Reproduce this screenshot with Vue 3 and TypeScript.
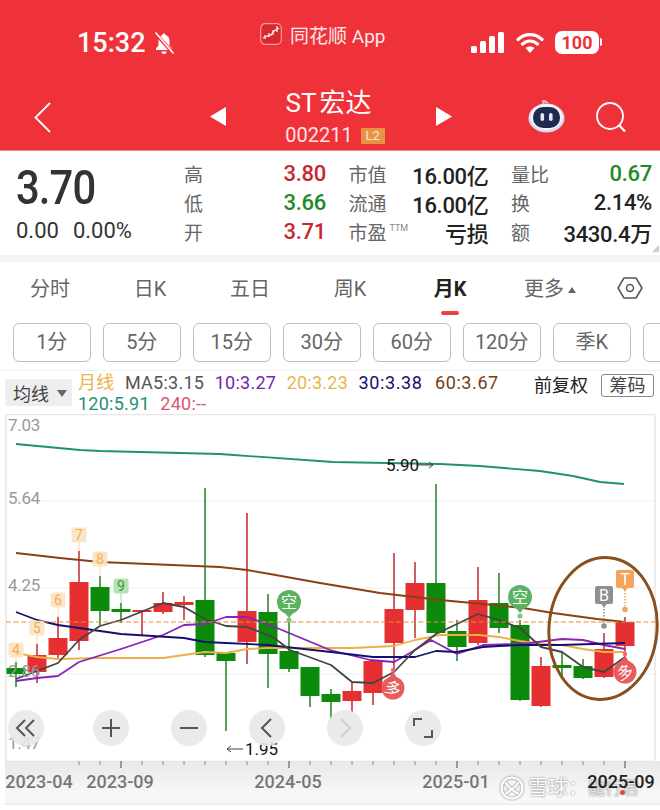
<script setup lang="ts">
interface Candle {
  x: number;
  up: boolean;
  top: number;
  bottom: number;
  high: number;
  low: number;
}

// [high, bodyTop, bodyBottom, low, red?] in chart pixels, one month every 21px from x=16
const rows: [number, number, number, number, boolean][] = [
  [662, 668, 674, 687, false],
  [644, 655, 672, 683, true],
  [617, 638, 655, 659, true],
  [551, 582, 641, 650, true],
  [576, 587, 611, 625, false],
  [603, 609, 612, 623, false],
  [610, 610, 612, 635, true],
  [592, 603, 612, 614, true],
  [596, 602, 605, 620, true],
  [488, 600, 655, 657, false],
  [652, 653, 661, 731, false],
  [513, 611, 642, 664, true],
  [594, 612, 654, 688, false],
  [620, 651, 669, 672, false],
  [667, 667, 696, 707, false],
  [689, 694, 702, 720, false],
  [682, 691, 701, 712, true],
  [661, 661, 693, 705, true],
  [553, 609, 643, 670, true],
  [562, 583, 610, 638, true],
  [484, 583, 633, 634, false],
  [620, 631, 647, 661, false],
  [567, 600, 643, 645, true],
  [573, 603, 628, 633, false],
  [620, 625, 700, 701, false],
  [657, 666, 706, 707, true],
  [653, 665, 668, 678, false],
  [659, 666, 678, 679, false],
  [633, 649, 677, 678, true],
  [617, 622, 646, 658, true],
];

const candles: Candle[] = rows.map((r, i) => ({
  x: 16 + i * 21,
  high: r[0],
  top: r[1],
  bottom: r[2],
  low: r[3],
  up: r[4],
}));

const lines = [
  { color: '#1f8f78', points: '16,444 80,450 100,451 220,454 333,462 440,464 480,466 540,471 573,476 600,482 624,484' },
  { color: '#8a3f14', points: '16,553 60,558 100,562 220,567 247,570 270,574 320,583 380,593 440,600 483,604 523,608 553,613 597,619 625,622' },
  { color: '#eeb046', points: '16,653 37,657 58,659 100,658 163,658 184,655 205,652 226,653 247,649 268,648 352,648 373,647 394,646 415,640 440,635 478,635 499,637 520,641 541,644 562,645 583,649 604,652 625,652' },
  { color: '#8a22b8', points: '16,681 37,678 58,676 79,662 121,649 163,635 184,625 205,624 226,617 247,617 277,628 330,650 370,660 394,662 410,653 431,640 457,654 483,645 520,644 530,643 562,639 583,640 604,645 625,649' },
  { color: '#141070', points: '16,612 37,620 58,625 79,628 121,634 184,638 205,642 226,643 268,645 331,652 373,657 415,657 436,651 457,652 483,647 499,646 520,645 560,645 625,643' },
  { color: '#444444', points: '16,679 58,663 79,640 100,626 121,620 163,603 184,607 205,619 226,626 247,627 273,637 290,650 331,665 352,682 373,683 394,672 415,650 436,634 457,624 478,614 499,620 520,628 541,647 562,652 583,667 604,672 625,657' },
];

const priceLabels = [
  { text: '7.03', y: 431 },
  { text: '5.64', y: 504 },
  { text: '4.25', y: 591 },
  { text: '2.86', y: 677 },
  { text: '1.47', y: 749 },
];

const counts = [
  { n: '4', x: 16, y: 650, late: false, stem: 12 },
  { n: '5', x: 37, y: 628, late: false, stem: 16 },
  { n: '6', x: 58, y: 600, late: false, stem: 17 },
  { n: '7', x: 79, y: 535, late: false, stem: 16 },
  { n: '8', x: 100, y: 559, late: false, stem: 17 },
  { n: '9', x: 121, y: 586, late: true, stem: 17 },
];

const ticks = candles.map((c) => c.x).filter((x) => x >= 79);

const dates = [
  { text: '2023-04', x: 39, dark: false },
  { text: '2023-09', x: 120, dark: false },
  { text: '2024-05', x: 288, dark: false },
  { text: '2025-01', x: 456, dark: false },
  { text: '2025-09', x: 621, dark: true },
];

const tabs = ['分时', '日K', '五日', '周K', '月K'];
const chips = ['1分', '5分', '15分', '30分', '60分', '120分', '季K', ''];
</script>

<template>
  <div class="page">
    <header class="head">
      <div class="status">
        <div class="clock">
          <span>15:32</span>
          <svg class="bell" viewBox="0 0 24 24" aria-hidden="true">
            <path d="M12 2.5c-1 0-1.6.7-1.7 1.6C7.700 5 6.500 7.300 6.500 10v4.500L4 17.500V19h16v-1.500l-2.500-3V10c0-2.700-1.200-5-3.800-5.900-.1-.9-.7-1.600-1.700-1.600zM9.500 20.500a2.500 2.500 0 0 0 5 0z" fill="#fff" />
            <path d="M3.500 2.500l18 20" stroke="#ef3239" stroke-width="3.500" />
            <path d="M3.500 1.500l18 21" stroke="#fff" stroke-width="1.600" />
          </svg>
        </div>
        <div class="notch">
          <svg class="logo" viewBox="0 0 22 22" aria-hidden="true">
            <rect x=".7" y=".7" width="20.600" height="20.600" rx="4.500" fill="#d9282e" stroke="#f79a9a" stroke-width="1.200" />
            <path d="M3 15l4-2 4-1 3-4 5-3" fill="none" stroke="#fff" stroke-width="1.300" />
            <path d="M5 12v4M9 10v4M13 7v5M17 3v6" stroke="#ffe1e1" stroke-width="1.400" />
          </svg>
          <span>同花顺 App</span>
        </div>
        <div class="sys">
          <svg class="signal" viewBox="0 0 33 21" aria-hidden="true">
            <rect x="0" y="14" width="6" height="7" rx="1.500" fill="#fff" />
            <rect x="9" y="9" width="6" height="12" rx="1.500" fill="#fff" />
            <rect x="18" y="4" width="6" height="17" rx="1.500" fill="#fff" />
            <rect x="27" y="0" width="6" height="21" rx="1.500" fill="#fff" />
          </svg>
          <svg class="wifi" viewBox="0 0 28 21" aria-hidden="true">
            <path d="M2 7.500c7-6.500 17-6.500 24 0M6.500 12c4.500-4 10.500-4 15 0" fill="none" stroke="#fff" stroke-width="3.200" stroke-linecap="round" />
            <path d="M14 21l-4.500-5c2.500-2 6.500-2 9 0z" fill="#fff" />
          </svg>
          <div class="battery">100</div>
          <i class="nub"></i>
        </div>
      </div>

      <div class="nav">
        <svg class="back" viewBox="0 0 17 31" aria-hidden="true">
          <path d="M16 1L1.500 15.500 16 30" fill="none" stroke="#fff" stroke-width="1.800" />
        </svg>
        <svg class="tri tri-l" viewBox="0 0 16 19" aria-hidden="true"><path d="M16 0v19L0 9.500z" fill="#fff" /></svg>
        <div class="title">
          <div class="name">ST 宏达</div>
          <div class="code">002211<span class="badge">L2</span></div>
        </div>
        <svg class="tri tri-r" viewBox="0 0 16 19" aria-hidden="true"><path d="M0 0v19l16-9.500z" fill="#fff" /></svg>
        <svg class="robot" viewBox="0 0 37 34" aria-hidden="true">
          <path d="M15 5l2-3 3 2" fill="none" stroke="#e9dfee" stroke-width="1.400" />
          <circle cx="15.500" cy="2.500" r="1.800" fill="#f3a6a6" />
          <ellipse cx="18.500" cy="19" rx="18" ry="14.500" fill="#d9d9f3" />
          <ellipse cx="18.500" cy="18" rx="16" ry="13" fill="#f3f3fb" />
          <rect x="5" y="8" width="27" height="21" rx="10" fill="#1e2b4f" />
          <rect x="12.500" y="14" width="3.600" height="8" rx="1.800" fill="#dfe8ff" />
          <rect x="21" y="14" width="3.600" height="8" rx="1.800" fill="#dfe8ff" />
        </svg>
        <svg class="search" viewBox="0 0 30 30" aria-hidden="true">
          <circle cx="14" cy="14" r="13" fill="none" stroke="#fff" stroke-width="1.900" />
          <path d="M23 23l6 6.500" stroke="#fff" stroke-width="2.200" />
        </svg>
      </div>
    </header>

    <section class="quote">
      <div class="last">
        <div class="price">3.70</div>
        <div class="change"><span>0.00</span><span>0.00%</span></div>
      </div>
      <div class="stats">
        <div class="stat"><label>高</label><b class="red">3.80</b></div>
        <div class="stat"><label>市值</label><b>16.00亿</b></div>
        <div class="stat"><label>量比</label><b class="green">0.67</b></div>
        <div class="stat"><label>低</label><b class="green">3.66</b></div>
        <div class="stat"><label>流通</label><b>16.00亿</b></div>
        <div class="stat"><label>换</label><b>2.14%</b></div>
        <div class="stat"><label>开</label><b class="red">3.71</b></div>
        <div class="stat"><label>市盈<sup>TTM</sup></label><b>亏损</b></div>
        <div class="stat"><label>额</label><b>3430.4万</b></div>
      </div>
      <i class="grip"></i>
    </section>

    <nav class="tabs">
      <div v-for="t in tabs" :key="t" class="tab" :class="{ on: t === '月K' }">{{ t }}</div>
      <div class="tab">更多<i class="caret"></i></div>
      <svg class="hex" viewBox="0 0 26 22" aria-hidden="true">
        <path d="M7 1h12l6 10-6 10H7L1 11z" fill="none" stroke="#555" stroke-width="1.500" stroke-linejoin="round" />
        <circle cx="13" cy="11" r="3.500" fill="none" stroke="#555" stroke-width="1.500" />
      </svg>
    </nav>

    <div class="chips">
      <div v-for="(c, i) in chips" :key="i" class="chip">{{ c }}</div>
    </div>

    <div class="legend">
      <div class="ma-select">均线<i></i></div>
      <div class="ma-values">
        <span class="c-yellow">月线</span>
        <span class="c-grey">MA5:3.15</span>
        <span class="c-purple">10:3.27</span>
        <span class="c-yellow">20:3.23</span>
        <span class="c-navy">30:3.38</span>
        <span class="c-brown">60:3.67</span>
        <span class="c-teal">120:5.91</span>
        <span class="c-pink">240:--</span>
      </div>
      <div class="adjust">前复权</div>
      <div class="chouma">筹码</div>
    </div>

    <div class="chart">
      <svg class="plot" width="660" height="347" viewBox="0 414 660 347" aria-hidden="true">
        <rect x="6" y="414.500" width="649" height="347" fill="#fff" stroke="#e6e6e6" stroke-width="1.500" />
        <path d="M6 501h649M6 588h649M6 674h649" stroke="#efefef" stroke-width="1.200" />

        <g v-for="c in candles" :key="c.x">
          <line :x1="c.x" :x2="c.x" :y1="c.high" :y2="c.low" :stroke="c.up ? '#c2363c' : '#2c8a2c'" stroke-width="1.600" />
          <rect :x="c.x - 9.500" :y="c.top" width="19" :height="c.bottom - c.top" :fill="c.up ? '#e62f30' : '#0b8a0b'" />
        </g>

        <polyline v-for="l in lines" :key="l.color" :points="l.points" fill="none" :stroke="l.color" stroke-width="1.800" stroke-linejoin="round" />
        <line x1="6" x2="655" y1="622" y2="622" stroke="#e28f3c" stroke-width="1.200" stroke-dasharray="5 2.500" />

        <g v-for="m in counts" :key="m.n">
          <line :x1="m.x" :x2="m.x" :y1="m.y + 7" :y2="m.y + m.stem" :stroke="m.late ? '#bfe6bf' : '#fbe3c4'" stroke-width="1.500" />
          <rect :x="m.x - 7.500" :y="m.y - 7.500" width="15" height="15" rx="2" :fill="m.late ? '#aee0ae' : '#fbe3c4'" opacity=".92" />
          <text :x="m.x" :y="m.y + 5" text-anchor="middle" class="count" :fill="m.late ? '#2f9a3a' : '#f3b04e'">{{ m.n }}</text>
        </g>

        <text v-for="p in priceLabels" :key="p.text" x="8" :y="p.y" class="price-label">{{ p.text }}</text>

        <text x="386" y="471" class="peak">5.90</text>
        <path d="M418 465h15M429 462l4 3-4 3" fill="none" stroke="#444" stroke-width="1" />
        <path d="M243 749h-16M231 746l-4 3 4 3" fill="none" stroke="#444" stroke-width="1" />
        <text x="245" y="755" class="peak">1.95</text>

        <g v-for="k in [{ x: 289, y: 602, tail: 620 }, { x: 520, y: 597, tail: 616 }]" :key="k.x">
          <circle :cx="k.x" :cy="k.y" r="12" fill="#5cb35f" />
          <path :d="`M${k.x - 5} ${k.y + 10}L${k.x} ${k.y + 16}L${k.x + 5} ${k.y + 10}z`" fill="#5cb35f" />
          <circle :cx="k.x" :cy="k.tail" r="2.500" fill="#7cc47f" />
          <text :x="k.x" :y="k.y + 6" text-anchor="middle" class="tag">空</text>
        </g>

        <ellipse cx="603" cy="628.500" rx="54" ry="71" transform="rotate(5 603 628.500)" fill="none" stroke="#8a4f1f" stroke-width="3" />

        <line x1="604" x2="604" y1="606" y2="626" stroke="#8f8f8f" stroke-width="1.500" stroke-dasharray="1.500 1.500" />
        <circle cx="604" cy="626" r="2.800" fill="#8f8f8f" />
        <rect x="595" y="586" width="18" height="18" rx="2" fill="#8f8f8f" />
        <path d="M601 604l3 3 3-3z" fill="#8f8f8f" />
        <text x="604" y="601" text-anchor="middle" class="tag">B</text>

        <line x1="625" x2="625" y1="590" y2="609" stroke="#f4a25c" stroke-width="1.500" stroke-dasharray="1.500 1.500" />
        <circle cx="625" cy="609.500" r="2.800" fill="#f4a25c" />
        <rect x="616" y="570" width="18" height="18" rx="2" fill="#f4a25c" />
        <path d="M622 588l3 3 3-3z" fill="#f4a25c" />
        <text x="625" y="585" text-anchor="middle" class="tag">T</text>

        <g v-for="d in [{ x: 393, y: 688, tip: 670, r: 20 }, { x: 625, y: 672, tip: 654, r: -20 }]" :key="d.x">
          <circle :cx="d.x" :cy="d.tip" r="2.200" fill="#ec6a6a" />
          <path :d="`M${d.x - 4} ${d.y - 10}L${d.x} ${d.tip + 1}L${d.x + 4} ${d.y - 10}z`" fill="#e95c5c" />
          <circle :cx="d.x" :cy="d.y" r="11.500" fill="#e95c5c" />
          <text :x="d.x" :y="d.y + 6" text-anchor="middle" class="tag" :transform="`rotate(${d.r} ${d.x} ${d.y})`">多</text>
        </g>
      </svg>

      <div class="tools">
        <button type="button" class="tool">
          <svg viewBox="0 0 22 20"><path d="M10 2l-8 8 8 8M19 2l-8 8 8 8" fill="none" stroke="#555" stroke-width="2" /></svg>
        </button>
        <button type="button" class="tool">
          <svg viewBox="0 0 22 20"><path d="M11 1v18M2 10h18" fill="none" stroke="#555" stroke-width="2" /></svg>
        </button>
        <button type="button" class="tool">
          <svg viewBox="0 0 22 20"><path d="M2 10h18" fill="none" stroke="#555" stroke-width="2" /></svg>
        </button>
        <button type="button" class="tool">
          <svg viewBox="0 0 22 20"><path d="M15 1L6 10l9 9" fill="none" stroke="#555" stroke-width="2" /></svg>
        </button>
        <button type="button" class="tool">
          <svg viewBox="0 0 22 20"><path d="M7 1l9 9-9 9" fill="none" stroke="#cfcfcf" stroke-width="2" /></svg>
        </button>
        <button type="button" class="tool">
          <svg viewBox="0 0 22 20"><path d="M2 8V1h8M20 12v7h-8" fill="none" stroke="#555" stroke-width="2" /></svg>
        </button>
      </div>
    </div>

    <div class="axis">
      <svg class="ticks" width="660" height="8" aria-hidden="true">
        <line v-for="x in ticks" :key="x" :x1="x" :x2="x" y1="0" :y2="[121, 289, 457, 625].includes(x) ? 7 : 4" stroke="#777" :stroke-width="[121, 289, 457, 625].includes(x) ? 1.400 : .8" />
      </svg>
      <span v-for="d in dates" :key="d.text" class="date" :class="{ dark: d.dark }" :style="{ left: d.x + 'px' }">{{ d.text }}</span>
      <div class="mark">
        <svg viewBox="0 0 24 24" aria-hidden="true">
          <circle cx="12" cy="12" r="10.500" fill="none" stroke="#fff" stroke-width="2.200" />
          <path d="M5 6c3 5 6 8 14 12M19 6c-3 5-5 6-7 7-2 2-4 3-7 5" fill="none" stroke="#fff" stroke-width="2.200" />
        </svg>
        <span class="wm-a">雪球：</span><span class="wm-b">龍行君</span>
      </div>
      <i class="red-dot"></i>
    </div>
  </div>
</template>

<style>
html,
body {
  margin: 0;
  background: #fff;
}
</style>

<style scoped>
.page {
  position: relative;
  width: 660px;
  height: 810px;
  overflow: hidden;
  background: #fff;
  color: #222;
  font-family: Roboto, "Noto Sans CJK SC", sans-serif;
}

.head {
  height: 150px;
  background: #ef3239;
  border-bottom: 1px solid #ea8a8a;
  color: #fff;
}

.status {
  display: flex;
  justify-content: space-between;
  height: 90px;
  padding: 23px 61px 0 77px;
  box-sizing: border-box;
}

.clock {
  display: flex;
  align-items: center;
  gap: 6px;
  height: 39px;
  font-size: 27px;
  font-weight: 500;
}

.bell {
  width: 24px;
  height: 24px;
}

.notch {
  display: flex;
  align-items: center;
  gap: 8px;
  height: 22px;
  margin-left: -1px;
  font-size: 19px;
  color: #fbe9e9;
}

.logo {
  width: 22px;
  height: 22px;
}

.sys {
  position: relative;
  display: flex;
  align-items: center;
  height: 39px;
}

.signal {
  width: 33px;
  height: 21px;
}

.wifi {
  width: 28px;
  height: 21px;
  margin-left: 12px;
}

.battery {
  width: 44px;
  height: 23px;
  margin-left: 11px;
  border-radius: 7px;
  background: #fff;
  color: #ef3239;
  font-size: 18px;
  font-weight: 700;
  line-height: 23px;
  text-align: center;
}

.nub {
  position: absolute;
  right: -3px;
  top: 15px;
  width: 2px;
  height: 8px;
  border-radius: 0 2px 2px 0;
  background: #fff;
}

.nav {
  position: relative;
  display: flex;
  align-items: flex-start;
  height: 60px;
}

.back {
  width: 17px;
  height: 31px;
  margin: 12px 0 0 34px;
}

.tri {
  width: 16px;
  height: 19px;
  margin-top: 17px;
}

.tri-l {
  margin-left: 159px;
}

.title {
  width: 210px;
  text-align: center;
}

.name {
  font-size: 26px;
  line-height: 26px;
  margin-top: 0;
  word-spacing: -3px;
  padding-right: 5px;
}

.code {
  display: flex;
  justify-content: center;
  align-items: center;
  gap: 8px;
  margin-top: 11px;
  padding-left: 8px;
  font-size: 20px;
  line-height: 17px;
  color: #fde4e4;
}

.badge {
  width: 24px;
  height: 16px;
  background: #e8933f;
  font-size: 13px;
  line-height: 16px;
  text-align: center;
}

.robot {
  width: 37px;
  height: 34px;
  margin: 9px 0 0 76px;
}

.search {
  width: 30px;
  height: 30px;
  margin: 12px 0 0 31px;
}

.quote {
  position: relative;
  display: flex;
  height: 105px;
  box-sizing: border-box;
  border-bottom: 1px solid #f2f2f2;
}

.last {
  width: 184px;
  padding: 10px 0 0 16px;
  box-sizing: border-box;
}

.price {
  font-size: 48px;
  line-height: 54px;
  font-weight: 500;
  color: #333;
  letter-spacing: -1px;
  transform: scaleX(.87);
  transform-origin: left;
}

.change {
  display: flex;
  gap: 14px;
  margin: 2px 0 0;
  font-size: 22px;
  line-height: 28px;
  color: #333;
}

.stats {
  display: grid;
  grid-template-columns: 142px 140px 141px;
  grid-auto-rows: 29px;
  column-gap: 22.500px;
  padding-top: 8px;
}

.stat {
  display: flex;
  justify-content: space-between;
  align-items: center;
  white-space: nowrap;
}

.stat label {
  font-size: 19px;
  color: #666;
}

.stat sup {
  margin-left: 3px;
  font-size: 9px;
  line-height: 0;
  color: #888;
  vertical-align: 9px;
}

.stat b {
  font-size: 22px;
  font-weight: 500;
  color: #222;
  letter-spacing: -.3px;
}

.stat b.red {
  color: #c8282d;
}

.stat b.green {
  color: #1e8a26;
}

.grip {
  position: absolute;
  right: 1px;
  bottom: 3px;
  width: 0;
  height: 0;
  border-left: 7px solid transparent;
  border-bottom: 7px solid #ccc;
}

.tabs {
  position: relative;
  display: flex;
  height: 61px;
  border-top: 6px solid #f5f5f5;
  box-sizing: border-box;
}

.tab {
  position: relative;
  width: 100px;
  padding-top: 14px;
  font-size: 20px;
  line-height: 26px;
  color: #666;
  text-align: center;
}

.tab.on {
  color: #222;
  font-weight: 700;
}

.tab.on::after {
  content: "";
  position: absolute;
  left: 41px;
  top: 49px;
  width: 18px;
  height: 4px;
  border-radius: 2px;
  background: #e8433f;
}

.caret {
  display: inline-block;
  margin-left: 4px;
  border-left: 4px solid transparent;
  border-right: 4px solid transparent;
  border-bottom: 6px solid #666;
  vertical-align: 3px;
}

.hex {
  width: 26px;
  height: 22px;
  margin: 15px 0 0 17px;
}

.chips {
  display: flex;
  gap: 12.500px;
  height: 39px;
  padding: 0 0 0 13px;
  margin-top: 6px;
}

.chip {
  flex: 0 0 77.500px;
  box-sizing: border-box;
  height: 39px;
  border: 1px solid #bdbdbd;
  border-radius: 6px;
  font-size: 20px;
  line-height: 37px;
  color: #666;
  text-align: center;
}

.legend {
  display: flex;
  align-items: flex-start;
  height: 42px;
  margin-top: 8px;
  border-top: 1px solid #f2f2f2;
  padding-top: 1px;
  box-sizing: content-box;
  font-size: 18px;
}

.ma-select {
  display: flex;
  align-items: center;
  width: 67px;
  height: 27px;
  margin: 7px 0 0 5px;
  padding-left: 8px;
  box-sizing: border-box;
  background: #eee;
  border-radius: 2px;
  color: #444;
}

.ma-select i {
  margin: 2px 0 0 8px;
  border-left: 5px solid transparent;
  border-right: 5px solid transparent;
  border-top: 7px solid #666;
}

.ma-values {
  display: flex;
  flex-wrap: wrap;
  width: 446px;
  margin-left: 6px;
  column-gap: 10.500px;
  letter-spacing: .25px;
  line-height: 21px;
  white-space: nowrap;
}

.c-yellow { color: #e9b44c; }
.c-grey { color: #555; }
.c-purple { color: #7a22b0; }
.c-navy { color: #14106e; letter-spacing: .6px; }
.c-brown { color: #7a3b14; letter-spacing: .6px; margin-left: 2px; }
.c-teal { color: #1f8f78; }
.c-pink { color: #d9566e; }

.c-teal {
  flex-basis: 70px;
}

.adjust {
  margin: 2px 0 0 10px;
  color: #222;
  line-height: 24px;
  white-space: nowrap;
}

.chouma {
  width: 53px;
  height: 23px;
  margin: 2px 0 0 13px;
  box-sizing: border-box;
  border: 1px solid #888;
  border-radius: 3px;
  color: #444;
  line-height: 21px;
  text-align: center;
}

.chart {
  position: relative;
  height: 347px;
}

.plot {
  display: block;
}

.price-label {
  font-size: 17px;
  letter-spacing: -.3px;
  fill: #999;
}

.count {
  font-size: 14px;
}

.peak {
  font-size: 17px;
  fill: #111;
}

.tag {
  font-size: 16px;
  fill: #fff;
}

.tools {
  position: absolute;
  left: 8px;
  top: 296px;
  display: flex;
  gap: 42px;
}

.tool {
  display: grid;
  place-items: center;
  width: 36px;
  height: 36px;
  padding: 0;
  border: 0;
  border-radius: 50%;
  background: rgb(232 232 232 / 90%);
}

.tool:first-child {
  margin-right: 7px;
}

.tool svg {
  width: 22px;
  height: 20px;
}

.axis {
  position: relative;
  height: 42px;
  margin-left: 5px;
  border-bottom: 2px solid #eee;
  background: linear-gradient(#e8e8e8, #f8f8f8 80%);
}

.ticks {
  position: absolute;
  left: -5px;
  top: 0;
}

.date {
  position: absolute;
  top: 9px;
  font-size: 18px;
  line-height: 24px;
  color: #777;
  font-weight: 500;
  white-space: nowrap;
  transform: translateX(-50%);
  margin-left: -5px;
}

.date.dark {
  color: #222;
  z-index: 1;
}

.mark {
  position: absolute;
  left: 495px;
  top: 15px;
  display: flex;
  align-items: center;
  font-size: 20px;
  line-height: 24px;
  color: #fff;
  text-shadow: 0 0 2px #666;
  white-space: nowrap;
}

.mark svg {
  width: 24px;
  height: 24px;
  margin-right: 4px;
  filter: drop-shadow(0 0 1px #777);
}

.wm-b {
  font-size: 17px;
  color: #e7e7e7;
}

.red-dot {
  position: absolute;
  left: 615px;
  top: 29px;
  width: 5px;
  height: 5px;
  border-radius: 50%;
  background: #e8433f;
  z-index: 2;
}
</style>
